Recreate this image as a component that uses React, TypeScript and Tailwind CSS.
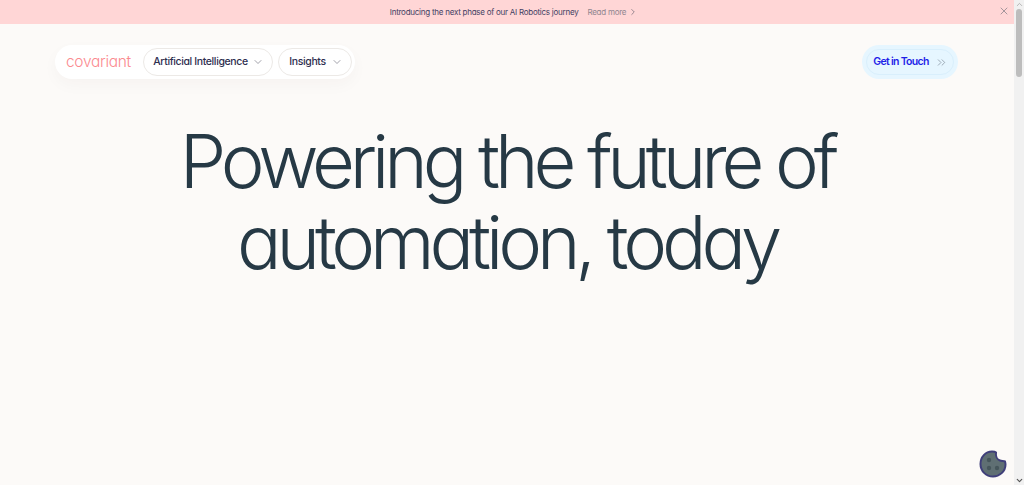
import React from 'react';
import { ChevronDown, ChevronRight, ChevronUp, ChevronsRight, X } from 'lucide-react';

const Cookie = () => (
  <svg viewBox="0 0 28 28" className="w-[28px] h-[28px]">
    <path
      d="M13 1.5C15 1.5 16.500 2 17 2.500C16.500 6 18 9.500 21 10.500C22.500 11 25 11 26 11.500C26.300 12.500 26.500 13.500 26.500 14.500C26.500 21.500 20.500 26.500 14 26.500C7 26.500 1.500 21 1.500 14C1.500 7 6.500 1.500 13 1.500Z"
      fill="#5f6f73"
      stroke="#3f3f7a"
      strokeWidth="2"
    />
    <circle cx="10" cy="10" r="2.200" fill="#46565b" />
    <circle cx="10" cy="18" r="2.200" fill="#46565b" />
    <circle cx="18" cy="18" r="2.200" fill="#46565b" />
  </svg>
);

export default function App() {
  return (
    <div className="flex h-[485px] w-full overflow-hidden bg-[#fcfaf8] font-['Inter',sans-serif] [font-feature-settings:'cv11']">
      <main className="relative flex-1 min-w-0">
        <div className="relative flex h-[24px] items-center justify-center bg-[#ffd6d6] pl-[14px] text-[8px] tracking-[-0.25px]">
          <span className="text-[#3f3f63]">Introducing the next phase of our AI Robotics journey</span>
          <span className="ml-[9px] flex items-center gap-[2px] text-[#8f858f]">
            Read more
            <ChevronRight size={10} strokeWidth={1.5} className="text-[#5f5866]" />
          </span>
          <X size={12} strokeWidth={1.25} className="absolute right-[4px] top-[5px] text-[#6f6f78]" />
        </div>

        <header className="flex items-center justify-between pl-[55px] pr-[56px] pt-[21px]">
          <nav className="flex h-[34px] items-center rounded-full bg-white pl-[11px] pr-[3px] shadow-[0_6px_16px_rgba(60,40,30,0.03)]">
            <span className="w-[77px] text-[15.5px] leading-none font-light tracking-[-0.3px] text-[#fb8a8f]">covariant</span>
            <button className="flex h-[28px] w-[130px] items-center justify-center gap-[4px] rounded-full border border-[#ece9e6] pl-[1px] text-[10.5px] font-[550] tracking-[-0.38px] text-[#2e2e4f]">
              Artificial Intelligence
              <ChevronDown size={12} strokeWidth={1.25} className="text-[#6a6a78]" />
            </button>
            <button className="ml-[5px] flex h-[28px] w-[74px] items-center justify-center gap-[5px] rounded-full border border-[#ece9e6] pl-[2px] text-[10.5px] font-[550] tracking-[-0.38px] text-[#2e2e4f]">
              Insights
              <ChevronDown size={12} strokeWidth={1.25} className="text-[#6a6a78]" />
            </button>
          </nav>
          <button className="flex h-[34px] w-[96px] items-center justify-center rounded-full bg-[#e6f6ff] p-[4px]">
            <span className="flex h-full w-full items-center justify-center gap-[6px] rounded-full border border-[#d9effc] pl-[1px] text-[10.5px] font-semibold tracking-[-0.7px] text-[#1f1fe8]">
              Get in Touch
              <ChevronsRight size={13} strokeWidth={1.25} className="text-[#7b8794]" />
            </span>
          </button>
        </header>

        <h1 className="mt-[42px] text-center text-[74px] leading-[81px] font-[260] tracking-[-5.1px] text-[#263945]">
          Powering the future of
          <br />
          automation, today
        </h1>

        <div className="absolute bottom-[7px] right-[7px]">
          <Cookie />
        </div>
      </main>

      <aside className="flex w-[10px] shrink-0 flex-col items-center justify-between bg-[#f1f1f1] text-[#555]">
        <ChevronUp size={9} strokeWidth={2} className="text-[#a3a3a3]" />
        <div className="mb-auto h-[68px] w-[6px] rounded-full bg-[#bdbdbd]" />
        <ChevronDown size={9} strokeWidth={3} />
      </aside>
    </div>
  );
}
